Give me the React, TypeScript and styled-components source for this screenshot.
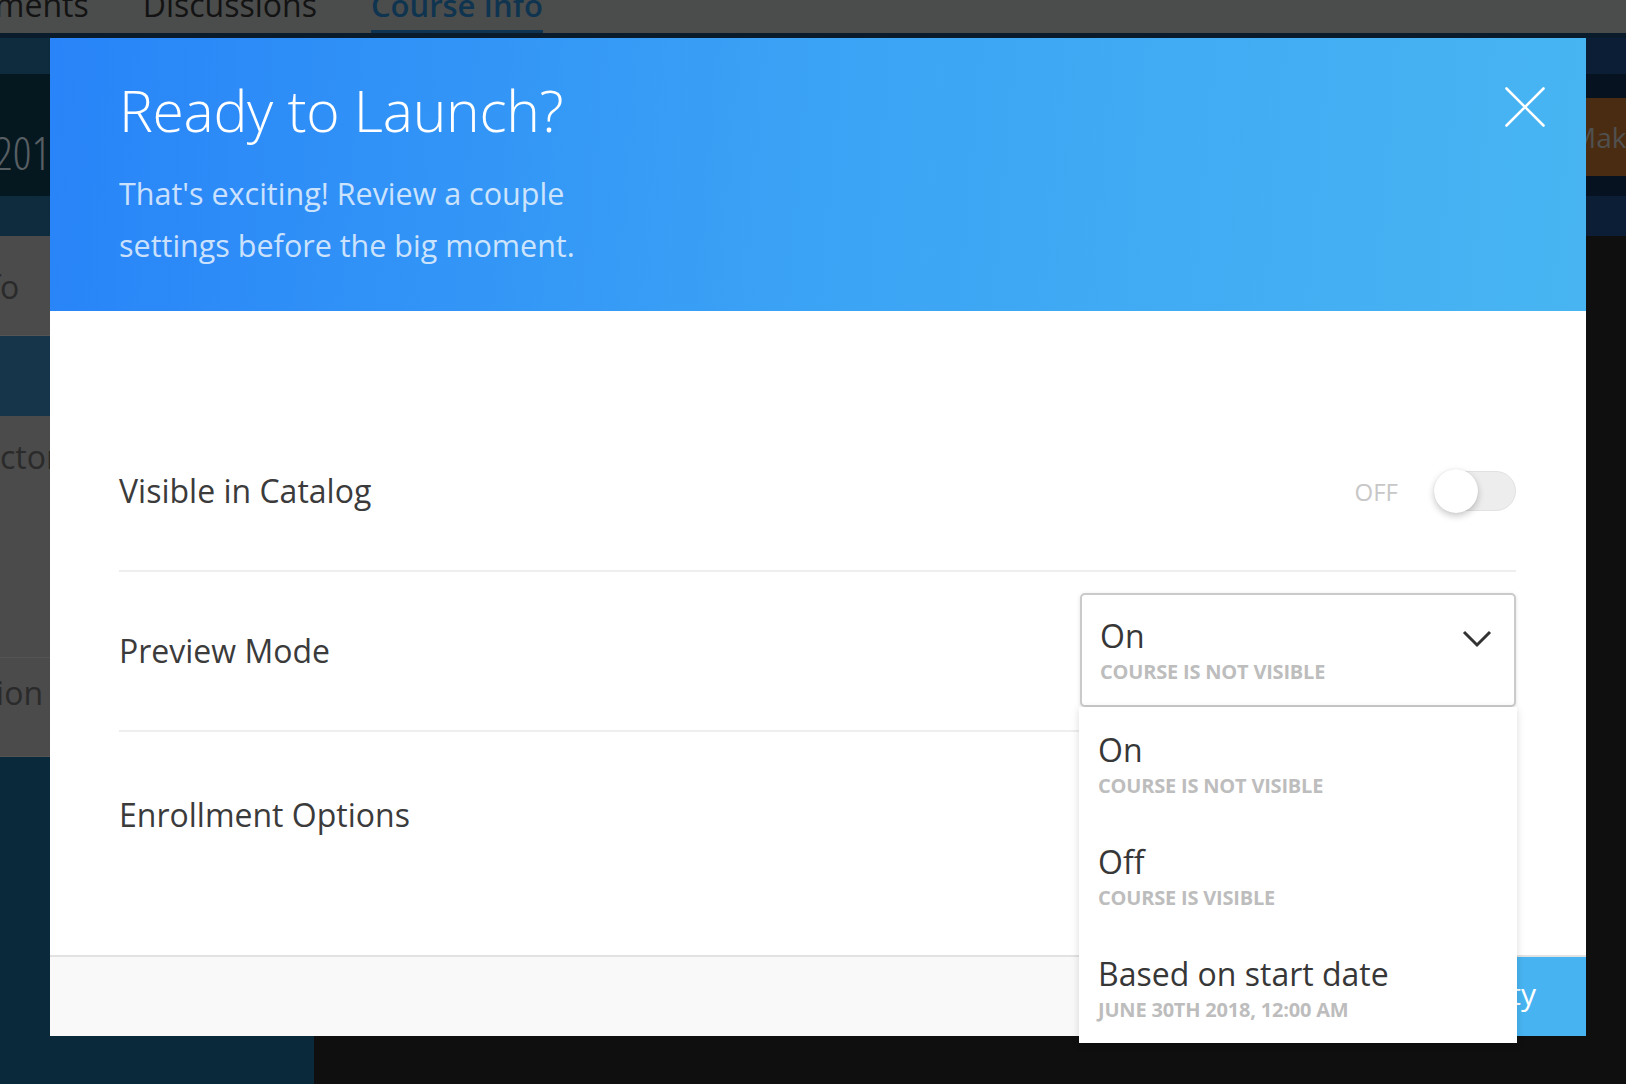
import React from "react";
import styled, { createGlobalStyle } from "styled-components";

const GlobalStyle = createGlobalStyle`
  html, body {
    margin: 0;
    padding: 0;
  }
  body {
    font-family: "Open Sans", "Noto Sans", sans-serif;
    background: #0f0f0f;
  }
  * {
    box-sizing: border-box;
  }
`;

const Screen = styled.div`
  position: relative;
  width: 1626px;
  height: 1084px;
  overflow: hidden;
  background: #0f0f0f;
`;

/* ---------- dimmed page behind the modal ---------- */

const TabBar = styled.div`
  height: 33px;
  background: #4b4c4c;
  display: flex;
  overflow: hidden;
`;

const TabRow = styled.div`
  display: flex;
  gap: 54px;
  margin-left: -101px;
`;

const Tab = styled.div<{ $active?: boolean }>`
  height: 33px;
  font-size: ${({ $active }) => ($active ? 31 : 32)}px;
  font-weight: ${({ $active }) => ($active ? 600 : 400)};
  line-height: 32px;
  white-space: nowrap;
  color: ${({ $active }) => ($active ? "#0e3450" : "#131313")};
  border-bottom: 3px solid ${({ $active }) => ($active ? "#0f3452" : "transparent")};

  span {
    display: block;
    margin-top: -11px;
  }
`;

const TabRule = styled.div`
  height: 5px;
  background: #0a1b2b;
`;

const Hero = styled.div`
  padding: 36px 0 40px;
  background: linear-gradient(90deg, #0e2c3d 0%, #0c2438 60%, #0b1e36 100%);
  overflow: hidden;
`;

const HeroInner = styled.div`
  height: 122px;
  display: flex;
  justify-content: space-between;
  align-items: flex-start;
  background: linear-gradient(90deg, #051820 0%, #061521 60%, #061220 100%);
`;

const YearText = styled.div`
  margin: 55px 0 0 -6px;
  font-size: 46px;
  line-height: 1;
  font-weight: 300;
  font-stretch: 75%;
  color: #585f63;
`;

const MakeButton = styled.div`
  margin: 24px -140px 0 0;
  height: 78px;
  width: 200px;
  padding-left: 5px;
  display: flex;
  align-items: center;
  background: #4a2c12;
  color: #50504e;
  font-size: 28px;
  white-space: nowrap;
`;

const Content = styled.div`
  display: flex;
  height: 848px;
`;

const Sidebar = styled.div`
  width: 314px;
  background: #0a2a3c;
  display: flex;
  flex-direction: column;
  overflow: hidden;
`;

const SideItem = styled.div<{ $h: number; $tone: "gray" | "active"; $pad: number }>`
  height: ${({ $h }) => $h}px;
  padding-top: ${({ $pad }) => $pad}px;
  background: ${({ $tone }) => ($tone === "active" ? "#16354a" : "#4b4b4b")};
  border-bottom: 1px solid ${({ $tone }) => ($tone === "active" ? "#16354a" : "#545454")};
`;

const SideText = styled.div<{ $shift: number }>`
  margin-left: ${({ $shift }) => $shift}px;
  font-size: 32px;
  line-height: 40px;
  white-space: nowrap;
  color: #2a2a2a;
`;

const MainArea = styled.div`
  flex: 1;
  background: #0f0f0f;
`;

/* ---------- modal ---------- */

const Modal = styled.div`
  position: absolute;
  top: 38px;
  left: 50px;
  width: 1536px;
  height: 998px;
  display: flex;
  flex-direction: column;
  background: #ffffff;
`;

const Header = styled.div`
  height: 273px;
  flex: none;
  display: flex;
  justify-content: space-between;
  align-items: flex-start;
  padding: 38px 41px 0 69px;
  background: linear-gradient(95deg, #2884f8 0%, #3ba3f5 50%, #48b5f2 100%);
  color: #fff;
`;

const Title = styled.h1`
  margin: 0;
  font-size: 57px;
  line-height: 69.6px;
  font-weight: 300;
  letter-spacing: -0.3px;
`;

const Subtitle = styled.p`
  margin: 21px 0 0;
  width: 500px;
  font-size: 30.5px;
  line-height: 52px;
  font-weight: 400;
  color: rgba(255, 255, 255, 0.76);
`;

const CloseButton = styled.button`
  margin-top: 11px;
  width: 40px;
  height: 40px;
  padding: 0;
  border: 0;
  background: transparent;
  cursor: pointer;
`;

const Body = styled.div`
  flex: 1;
  padding: 101px 70px 0 69px;
`;

const Row = styled.div<{ $last?: boolean }>`
  height: 160px;
  display: flex;
  align-items: center;
  justify-content: space-between;
  border-bottom: ${({ $last }) => ($last ? "none" : "2px solid #eeeeee")};
`;

const Label = styled.div<{ $nudge?: number }>`
  font-size: 32px;
  line-height: 38.4px;
  color: #3b3b3b;
  margin-top: ${({ $nudge }) => $nudge ?? 0}px;
`;

const ToggleGroup = styled.div`
  display: flex;
  align-items: center;
  gap: 36px;
`;

const ToggleState = styled.span`
  font-size: 24px;
  color: #c7c7c7;
`;

const Track = styled.div`
  position: relative;
  width: 80px;
  height: 40px;
  margin-left: 2px;
  border-radius: 20px;
  background: #ededed;
  border: 1px solid #e2e2e2;
`;

const Knob = styled.div`
  position: absolute;
  left: -3px;
  top: -3px;
  width: 44px;
  height: 44px;
  border-radius: 50%;
  background: #fff;
  box-shadow: 0 3px 7px rgba(0, 0, 0, 0.22), 0 0 1px rgba(0, 0, 0, 0.12);
`;

const SelectWrap = styled.div`
  position: relative;
  width: 436px;
  margin-top: -2px;
`;

const SelectBox = styled.div`
  height: 114px;
  display: flex;
  justify-content: space-between;
  align-items: flex-start;
  padding: 23px 22px 0 18px;
  border: 2px solid #cacaca;
  border-radius: 5px;
  background: #fff;
  box-shadow: 0 1px 4px rgba(0, 0, 0, 0.12);
`;

const Chevron = styled.svg`
  margin-top: 12px;
  flex: none;
`;

const OptionTitle = styled.div`
  font-size: 32px;
  line-height: 36px;
  color: #373737;
  white-space: nowrap;
`;

const OptionHint = styled.div`
  margin-top: 6px;
  font-size: 20px;
  line-height: 24px;
  font-weight: 700;
  letter-spacing: -0.2px;
  text-transform: uppercase;
  color: #bdbdbd;
  white-space: nowrap;
`;

const Menu = styled.ul`
  position: absolute;
  top: 100%;
  left: -1px;
  right: -1px;
  margin: 0;
  padding: 0;
  list-style: none;
  background: #fff;
  box-shadow: 0 2px 8px rgba(0, 0, 0, 0.14);
  z-index: 5;
`;

const MenuItem = styled.li`
  height: 112px;
  padding: 25px 18px 0 19px;
`;

const Footer = styled.div`
  height: 81px;
  flex: none;
  display: flex;
  justify-content: flex-end;
  border-top: 2px solid #e2e2e2;
  background: #f9f9f9;
`;

const PrimaryButton = styled.button`
  height: 100%;
  padding: 0 50px 6px;
  border: 0;
  background: #47b4f1;
  color: #fff;
  font-family: inherit;
  font-size: 30px;
`;

const options = [
  { title: "On", hint: "Course is not visible" },
  { title: "Off", hint: "Course is visible" },
  { title: "Based on start date", hint: "June 30th 2018, 12:00 AM" },
];

export default function App() {
  return (
    <Screen>
      <GlobalStyle />
      <TabBar>
        <TabRow>
          <Tab>
            <span>Assignments</span>
          </Tab>
          <Tab>
            <span>Discussions</span>
          </Tab>
          <Tab $active>
            <span>Course Info</span>
          </Tab>
        </TabRow>
      </TabBar>
      <TabRule />
      <Hero>
        <HeroInner>
          <YearText>2018</YearText>
          <MakeButton>Make Public</MakeButton>
        </HeroInner>
      </Hero>
      <Content>
        <Sidebar>
          <SideItem $h={100} $tone="gray" $pad={31}>
            <SideText $shift={-153}>Course Info</SideText>
          </SideItem>
          <SideItem $h={80} $tone="active" $pad={0} />
          <SideItem $h={242} $tone="gray" $pad={21}>
            <SideText $shift={-88}>Instructor</SideText>
          </SideItem>
          <SideItem $h={99} $tone="gray" $pad={15}>
            <SideText $shift={-130}>Completion Certificate</SideText>
          </SideItem>
        </Sidebar>
        <MainArea />
      </Content>

      <Modal>
        <Header>
          <div>
            <Title>Ready to Launch?</Title>
            <Subtitle>That's exciting! Review a couple settings before the big moment.</Subtitle>
          </div>
          <CloseButton aria-label="Close">
            <svg width="40" height="40" viewBox="0 0 40 40">
              <path d="M1.5 1.5 L38.5 38.5 M38.5 1.5 L1.5 38.5" stroke="#fff" strokeWidth="2.6" strokeLinecap="round" />
            </svg>
          </CloseButton>
        </Header>
        <Body>
          <Row>
            <Label>Visible in Catalog</Label>
            <ToggleGroup>
              <ToggleState>OFF</ToggleState>
              <Track>
                <Knob />
              </Track>
            </ToggleGroup>
          </Row>
          <Row>
            <Label>Preview Mode</Label>
            <SelectWrap>
              <SelectBox>
                <div>
                  <OptionTitle>On</OptionTitle>
                  <OptionHint>Course is not visible</OptionHint>
                </div>
                <Chevron width="30" height="18" viewBox="0 0 30 18">
                  <path d="M2 2 L15 15 L28 2" fill="none" stroke="#333" strokeWidth="3" />
                </Chevron>
              </SelectBox>
              <Menu>
                {options.map((o) => (
                  <MenuItem key={o.title}>
                    <OptionTitle>{o.title}</OptionTitle>
                    <OptionHint>{o.hint}</OptionHint>
                  </MenuItem>
                ))}
              </Menu>
            </SelectWrap>
          </Row>
          <Row $last>
            <Label $nudge={6}>Enrollment Options</Label>
          </Row>
        </Body>
        <Footer>
          <PrimaryButton>Confirm Visibility</PrimaryButton>
        </Footer>
      </Modal>
    </Screen>
  );
}
